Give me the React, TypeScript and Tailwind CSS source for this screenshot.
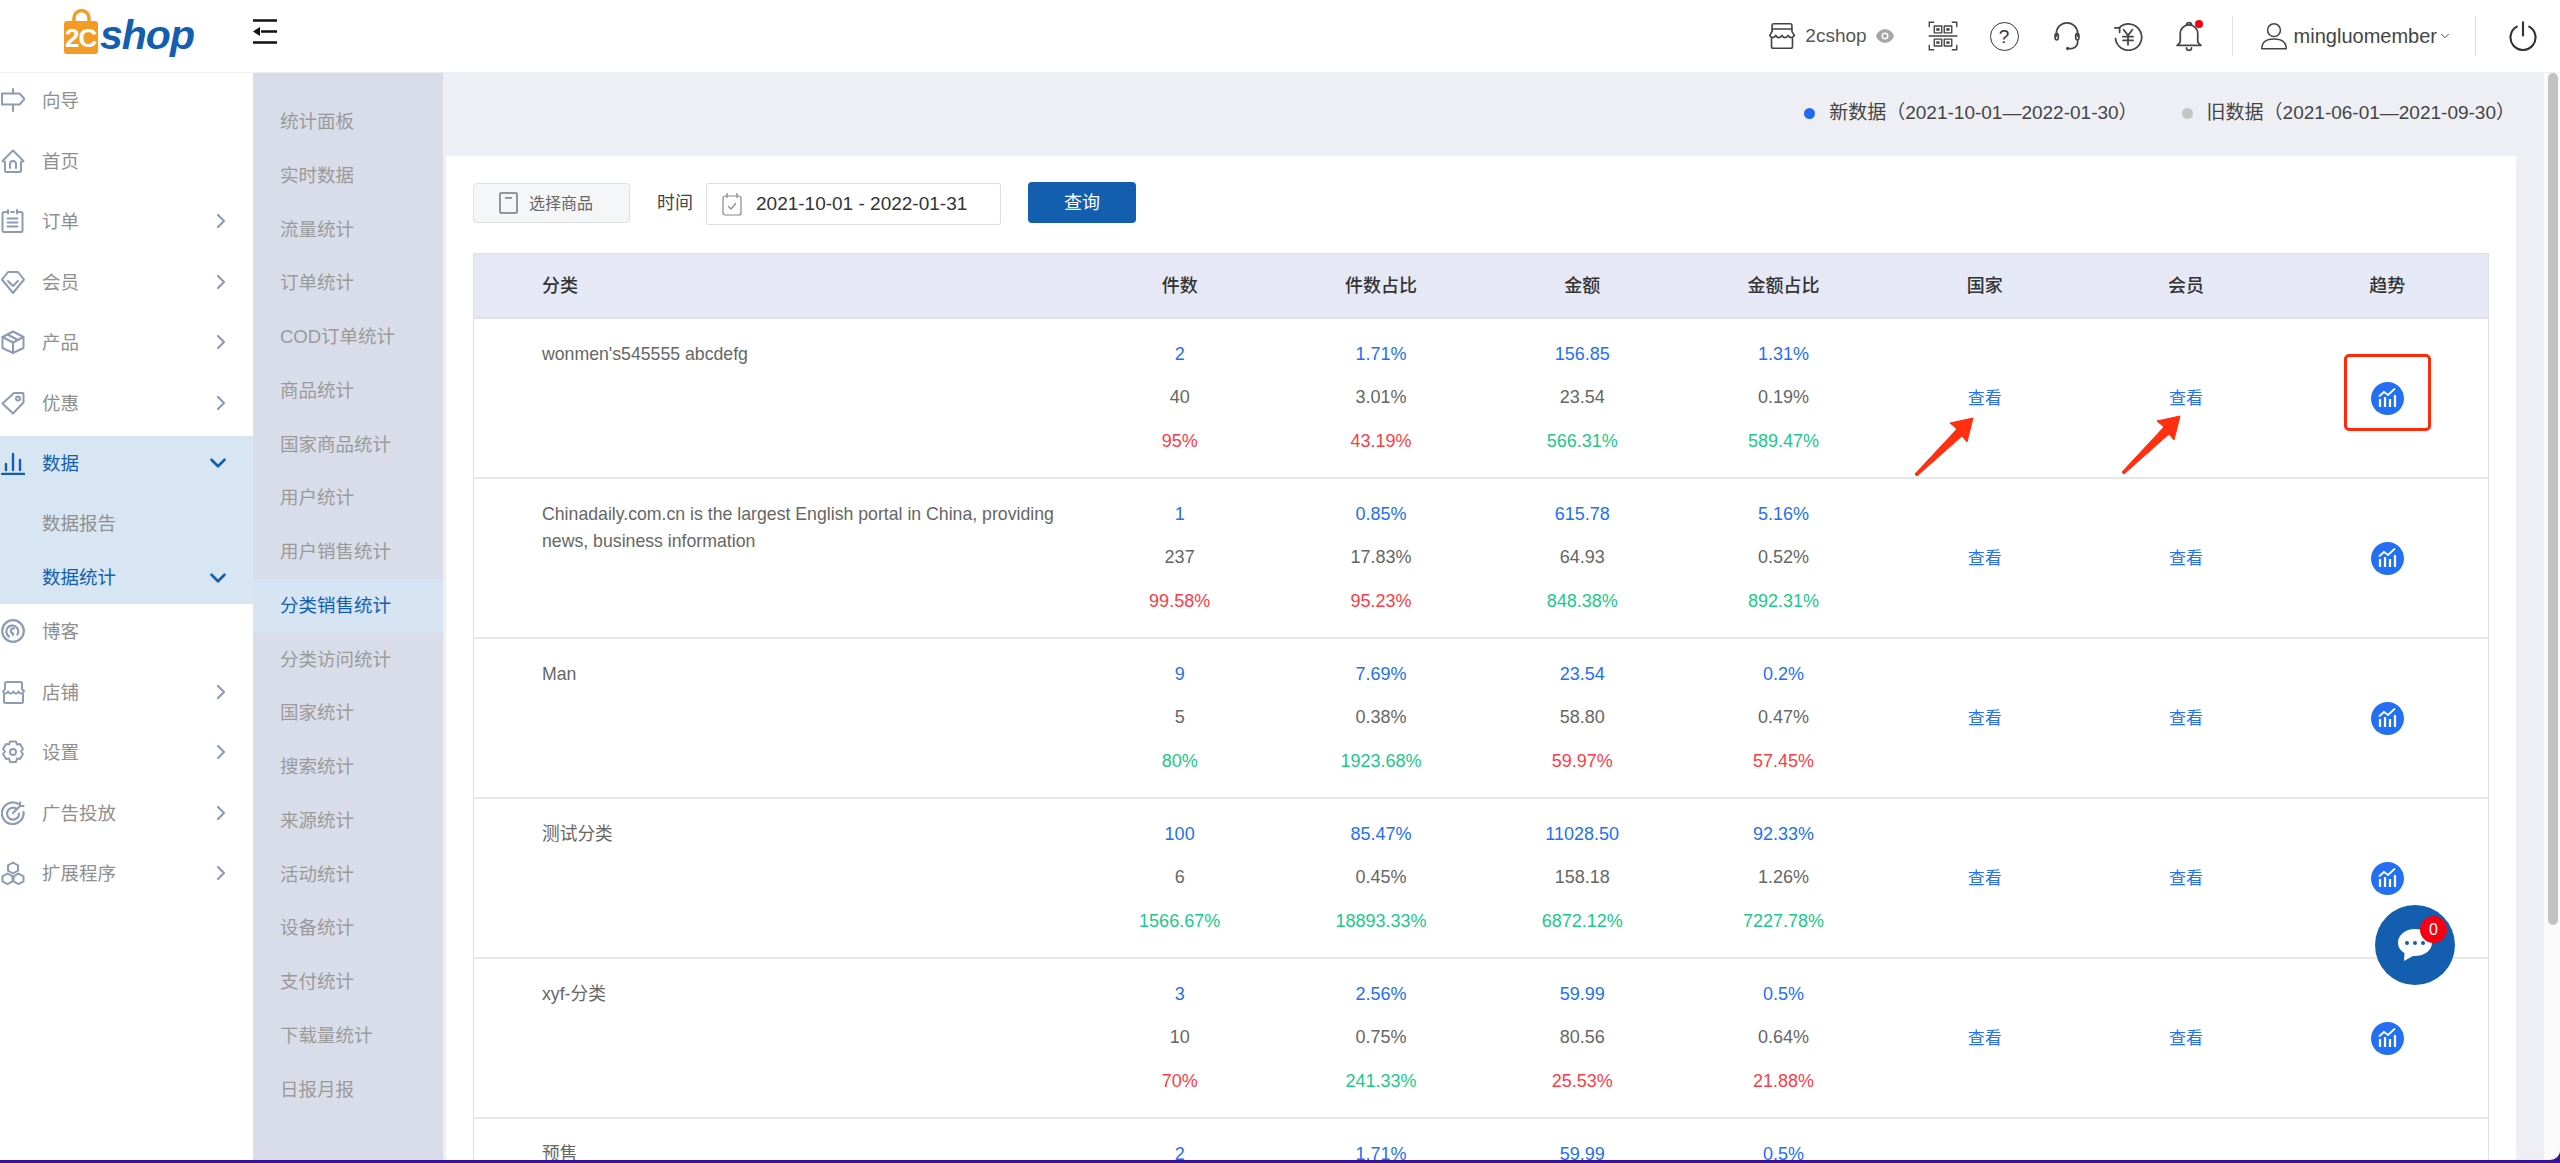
import { ReactNode } from "react";
import { ChevronDown, ChevronRight } from "lucide-react";

const FONT = "font-['Liberation_Sans','Noto_Sans_CJK_SC',sans-serif]";

function Ico({ children, size = 24, className = "" }: { children: ReactNode; size?: number; className?: string }) {
  return (
    <svg
      width={size}
      height={size}
      viewBox="0 0 24 24"
      fill="none"
      stroke="currentColor"
      strokeWidth="2"
      strokeLinecap="round"
      strokeLinejoin="round"
      className={className}
    >
      {children}
    </svg>
  );
}

const sideIcons: Record<string, ReactNode> = {
  guide: (
    <>
      <path d="M1 5.500h17.500l5 5.500-5 5.500H1z" />
      <path d="M12 1v4.500M12 16.500V23" />
    </>
  ),
  home: (
    <>
      <path d="M12 1.500 1.500 12l2.500 1v8.500a1.500 1.500 0 0 0 1.500 1.500h13a1.500 1.500 0 0 0 1.500-1.500V13l2.500-1z" />
      <path d="M9 19v-4a3 3 0 0 1 6 0v4" />
    </>
  ),
  order: (
    <>
      <path d="M7 3H3a1.500 1.500 0 0 0-1.500 1.500v17A1.500 1.500 0 0 0 3 23h17a1.500 1.500 0 0 0 1.500-1.500v-17A1.500 1.500 0 0 0 20 3h-4" />
      <path d="M7 1v3.500M16 1v3.500M10 3h3M6.500 9.500h10M6.500 13.500h10M6.500 17.500h10" />
    </>
  ),
  member: (
    <>
      <path d="M7 2h10l6 7.500L12 23 1 9.500z" />
      <path d="m7 11 5 5 5-5" />
    </>
  ),
  product: (
    <>
      <path d="M12 1.500 22.500 7v11L12 23 1.500 18V7z" />
      <path d="M1.500 7 12 12.500 22.500 7M12 12.500V23M6.500 4.500 17 10" />
    </>
  ),
  promo: (
    <>
      <path d="M13 2h8.500a1 1 0 0 1 1 1v8.500L12 22.500 1.500 12.500z" />
      <circle cx="17" cy="7.500" r="2" />
    </>
  ),
  data: (
    <>
      <path d="M1 23h23" strokeWidth="2.400" />
      <path d="M5 13v6M12 3v16M19 9v10" strokeWidth="2.400" />
    </>
  ),
  blog: (
    <>
      <circle cx="12" cy="12" r="10.800" strokeWidth="2.200" />
      <path d="M8 17.500a6 6 0 1 1 8.500-2" strokeWidth="2.200" />
      <path d="M12 16v-1.500a2.500 2.500 0 0 1 1-5" strokeWidth="2.200" />
    </>
  ),
  store: (
    <>
      <path d="M4 9V3.500A1.500 1.500 0 0 1 5.500 2h14A1.500 1.500 0 0 1 21 3.500V9l2 2" />
      <path d="M2 11.500 4 9M2 11.500c1 2.500 4 2.500 5 0 1 2.500 4 2.500 5.500 0 1 2.500 4 2.500 5 0 1 2.500 4 2.500 5 0" />
      <path d="M3 14v7.500A1.500 1.500 0 0 0 4.500 23h16a1.500 1.500 0 0 0 1.500-1.500V14" />
    </>
  ),
  gear: (
    <>
      <path d="m9 1.500 6 0 1 3 3-.5 3 5-2 2.500 2 2.500-3 5-3-.5-1 3.500-6 0-1-3.500-3 .5-3-5 2-2.500-2-2.500 3-5 3 .5z" />
      <circle cx="12" cy="12" r="3" />
    </>
  ),
  target: (
    <>
      <path d="M17 2.800A10.800 10.800 0 1 0 22.500 11" strokeWidth="2.200" />
      <path d="M15 7.500a6 6 0 1 0 3 5" strokeWidth="2.200" />
      <path d="M12 12l7-7M19 1.500V5h3.500" strokeWidth="2.200" />
    </>
  ),
  ext: (
    <>
      <path d="m12 1.500 5 2.800v5.400l-5 2.800-5-2.800V4.300z" />
      <path d="m6.500 12.500 5 2.800v5l-5 2.800-5-2.800v-5z" />
      <path d="m17.500 12.500 5 2.800v5l-5 2.800-5-2.800v-5z" />
    </>
  ),
};

function SideRow({ icon, label, arrow, gap = true }: { icon: string; label: string; arrow?: boolean; gap?: boolean }) {
  return (
    <div className={`flex h-[54px] items-center text-[18.500px] text-[#8f8f8f] ${gap ? "mb-[6.500px]" : ""}`}>
      <Ico className="ml-[1px] text-[#8e9bb4]">{sideIcons[icon]}</Ico>
      <span className="ml-[17px] flex-1 pt-[2px]">{label}</span>
      {arrow && <ChevronRight size={24} strokeWidth={2.200} className="mr-[20px] text-[#8e9bb4]" />}
    </div>
  );
}

function PrimarySide() {
  return (
    <aside className="w-[253px] shrink-0 bg-white">
      <SideRow icon="guide" label="向导" />
      <SideRow icon="home" label="首页" />
      <SideRow icon="order" label="订单" arrow />
      <SideRow icon="member" label="会员" arrow />
      <SideRow icon="product" label="产品" arrow />
      <SideRow icon="promo" label="优惠" arrow />
      <div className="bg-[#d8e6f4] text-[18.500px]">
        <div className="mb-[6px] flex h-[54px] items-center text-[#145eb0]">
          <Ico className="ml-[1px]">{sideIcons.data}</Ico>
          <span className="ml-[17px] flex-1 pt-[2px]">数据</span>
          <ChevronDown size={26} strokeWidth={2.400} className="mr-[22px]" />
        </div>
        <div className="flex h-[54px] items-center pl-[42px] pt-[2px] text-[#8f8f8f]">数据报告</div>
        <div className="flex h-[54px] items-center pl-[42px] pt-[2px] text-[#145eb0]">
          <span className="flex-1">数据统计</span>
          <ChevronDown size={26} strokeWidth={2.400} className="mr-[22px]" />
        </div>
      </div>
      <SideRow icon="blog" label="博客" />
      <SideRow icon="store" label="店铺" arrow />
      <SideRow icon="gear" label="设置" arrow />
      <SideRow icon="target" label="广告投放" arrow />
      <SideRow icon="ext" label="扩展程序" arrow />
    </aside>
  );
}

const subMenu = [
  "统计面板", "实时数据", "流量统计", "订单统计", "COD订单统计", "商品统计", "国家商品统计", "用户统计", "用户销售统计",
  "分类销售统计", "分类访问统计", "国家统计", "搜索统计", "来源统计", "活动统计", "设备统计", "支付统计", "下载量统计", "日报月报",
];

function SecondarySide() {
  return (
    <aside className="w-[190px] shrink-0 bg-[#d9dde9] pt-[22px]">
      {subMenu.map((m) => (
        <div
          key={m}
          className={`flex h-[53.750px] items-center pl-[27px] text-[18.500px] ${
            m === "分类销售统计" ? "bg-[#d6e4f3] text-[#145eb0]" : "text-[#9a9a9a]"
          }`}
        >
          {m}
        </div>
      ))}
    </aside>
  );
}

function Logo() {
  return (
    <div className="ml-[64px] flex w-[189px] items-center -mt-[10px]">
      <div className="relative h-[46px] w-[35px]">
        <svg width="35" height="46" viewBox="0 0 35 46" className="absolute inset-0">
          <path d="M10 16V10a7.500 7.500 0 0 1 15 0v6" fill="none" stroke="#f39c25" strokeWidth="3.500" />
          <rect x="0" y="13" width="34" height="33" rx="3" fill="#f39c25" />
        </svg>
        <span className="absolute left-[1px] top-[17px] text-[26px] font-bold leading-[26px] tracking-[-1px] text-white">2C</span>
      </div>
      <span className="ml-[1px] mt-[8px] text-[41px] font-bold italic leading-none tracking-[-1px] text-[#145eb0]">shop</span>
    </div>
  );
}

function TopBar() {
  return (
    <header className="flex h-[73px] shrink-0 items-center border-b border-[#eeeff5] bg-white text-[#333]">
      <Logo />
      <svg width="24" height="25" viewBox="0 0 24 25" className="-mt-[9px]">
        <path d="M0 1.500h24M8 12.500h16M0 23.500h24" stroke="#111" strokeWidth="2.500" />
        <path d="M0 12.500 7 8v9z" fill="#111" />
      </svg>
      <div className="ml-auto flex items-center">
        <Ico size={28} className="text-[#444]">
          <path d="M3.500 8V3A1.500 1.500 0 0 1 5 1.500h14A1.500 1.500 0 0 1 20.500 3v5l2 3.500" strokeWidth="1.400" />
          <path d="M1.500 11.500 3.500 8M3.500 6h17M1.500 11.500c1 2.500 4 2.500 5.200 0 1 2.500 4 2.500 5.300 0 1 2.500 4 2.500 5.300 0 1 2.500 4 2.500 5.200 0" strokeWidth="1.400" />
          <path d="M3 14.500v6.500A1.500 1.500 0 0 0 4.500 22.500h15A1.500 1.500 0 0 0 21 21v-6.500" strokeWidth="1.400" />
        </Ico>
        <span className="ml-[9px] text-[19px] text-[#555]">2cshop</span>
        <svg width="18" height="14" viewBox="0 0 18 14" className="ml-[9px]">
          <path d="M0 7c3-9 15-9 18 0-3 9-15 9-18 0z" fill="#a6a6a6" />
          <circle cx="9" cy="7" r="3.500" fill="#fff" />
          <circle cx="9" cy="7" r="2" fill="#a6a6a6" />
        </svg>
        <Ico size={30} className="ml-[34px] text-[#444]">
          <path d="M1 5V1h4M19 1h4v4M1 19v4h4M19 23h4v-4M0.500 12h23" strokeWidth="1.100" strokeLinecap="butt" strokeLinejoin="miter" />
          <path d="M5 4h6v5.500H5zM13 4h6v5.500h-6zM5 14.500h6V20H5zM13 14.500h6V20h-6z" strokeWidth="1.100" />
          <path d="M7 6h2v1.500H7zM15 6h2v1.500h-2zM7 16.500h2V18H7zM15 16.500h2V18h-2z" fill="currentColor" strokeWidth="0.500" />
        </Ico>
        <div className="ml-[32px] flex h-[29px] w-[29px] items-center justify-center rounded-full border-[1.600px] border-[#333] text-[19px] leading-none text-[#333]">?</div>
        <Ico size={30} className="ml-[33px] text-[#444]">
          <path d="M3.500 12V10a8.500 8.500 0 0 1 17 0v2" strokeWidth="1.400" />
          <rect x="2.500" y="10" width="2.500" height="5" rx="1.200" strokeWidth="1.400" />
          <rect x="19" y="10" width="2.500" height="5" rx="1.200" strokeWidth="1.400" />
          <path d="M20.500 15v2a5 5 0 0 1-5 5h-2" strokeWidth="1.400" />
          <circle cx="12.500" cy="22" r="1" fill="currentColor" strokeWidth="0.800" />
        </Ico>
        <Ico size={30} className="ml-[31px] text-[#444]">
          <path d="M5 5.500A10.500 10.500 0 1 1 2 14" strokeWidth="1.400" />
          <path d="M1.500 5.500h3.800V9M8.500 7l3.500 4.500L15.500 7M12 11.500V19M8 12.500h8M8 15.500h8" strokeWidth="1.400" />
        </Ico>
        <div className="relative ml-[31px]">
          <Ico size={30} className="text-[#444]">
            <path d="M5 17V10a7 7 0 0 1 14 0v7l2.500 2.500h-19zM10 3.200a2 2 0 0 1 4 0M10 21.500a2 2 0 0 0 4 0" strokeWidth="1.400" />
          </Ico>
          <span className="absolute -top-[1px] right-[1px] h-[8px] w-[8px] rounded-full bg-[#f40012]" />
        </div>
        <div className="ml-[28px] h-[40px] w-[1px] bg-[#e2e2e2]" />
        <Ico size={28} className="ml-[27px] text-[#444]">
          <circle cx="12" cy="7" r="5.500" strokeWidth="1.300" />
          <path d="M1.500 23c0-6 4-8.500 10.500-8.500S22.500 17 22.500 23z" strokeWidth="1.300" />
        </Ico>
        <span className="ml-[6px] text-[20px] text-[#444]">mingluomember</span>
        <ChevronDown size={14} strokeWidth={1.600} className="ml-[1px] text-[#444]" />
        <div className="ml-[23px] h-[40px] w-[1px] bg-[#e2e2e2]" />
        <Ico size={30} className="ml-[32px] mr-[22px] text-[#333]">
          <path d="M7 4.500a10 10 0 1 0 10 0M12 1v10.500" strokeWidth="1.700" />
        </Ico>
      </div>
    </header>
  );
}

type Tone = "b" | "n" | "r" | "g";
const toneCls: Record<Tone, string> = {
  b: "text-[#2370f4]",
  n: "text-[#666]",
  r: "text-[#ff3b46]",
  g: "text-[#19c98a]",
};

type Cell = [string, string, string, Tone];
const rows: { name: string; cells: Cell[] }[] = [
  {
    name: "wonmen's545555 abcdefg",
    cells: [
      ["2", "40", "95%", "r"],
      ["1.71%", "3.01%", "43.19%", "r"],
      ["156.85", "23.54", "566.31%", "g"],
      ["1.31%", "0.19%", "589.47%", "g"],
    ],
  },
  {
    name: "Chinadaily.com.cn is the largest English portal in China, providing news, business information",
    cells: [
      ["1", "237", "99.58%", "r"],
      ["0.85%", "17.83%", "95.23%", "r"],
      ["615.78", "64.93", "848.38%", "g"],
      ["5.16%", "0.52%", "892.31%", "g"],
    ],
  },
  {
    name: "Man",
    cells: [
      ["9", "5", "80%", "g"],
      ["7.69%", "0.38%", "1923.68%", "g"],
      ["23.54", "58.80", "59.97%", "r"],
      ["0.2%", "0.47%", "57.45%", "r"],
    ],
  },
  {
    name: "测试分类",
    cells: [
      ["100", "6", "1566.67%", "g"],
      ["85.47%", "0.45%", "18893.33%", "g"],
      ["11028.50", "158.18", "6872.12%", "g"],
      ["92.33%", "1.26%", "7227.78%", "g"],
    ],
  },
  {
    name: "xyf-分类",
    cells: [
      ["3", "10", "70%", "r"],
      ["2.56%", "0.75%", "241.33%", "g"],
      ["59.99", "80.56", "25.53%", "r"],
      ["0.5%", "0.64%", "21.88%", "r"],
    ],
  },
  {
    name: "预售",
    cells: [
      ["2", "", "", "n"],
      ["1.71%", "", "", "n"],
      ["59.99", "", "", "n"],
      ["0.5%", "", "", "n"],
    ],
  },
];

function TrendIcon() {
  return (
    <svg width="33" height="33" viewBox="0 0 33 33">
      <circle cx="16.500" cy="16.500" r="16.500" fill="#2370f4" />
      <path d="M8 14.500l5-4.500 4 3 7-6.500" fill="none" stroke="#fff" strokeWidth="1.800" />
      <path d="M9 17v8M14 15v10M19 17v8M24 13v12" stroke="#fff" strokeWidth="2.200" />
    </svg>
  );
}

const GRID = "grid grid-cols-[605px_repeat(7,1fr)]";

function DataRow({ name, cells }: { name: string; cells: Cell[] }) {
  return (
    <div className={`${GRID} h-[160px] shrink-0 border-b-2 border-[#e8e8e8] text-[18px]`}>
      <div className="pl-[68px] pr-[10px] pt-[22px] text-[17.700px] leading-[27px] text-[#666]">{name}</div>
      {cells.map((c, i) => (
        <div key={i} className="flex flex-col items-center pt-[13.500px]">
          <span className={`flex h-[43.500px] items-center ${toneCls.b}`}>{c[0]}</span>
          <span className={`flex h-[43.500px] items-center ${toneCls.n}`}>{c[1]}</span>
          <span className={`flex h-[43.500px] items-center ${toneCls[c[3]]}`}>{c[2]}</span>
        </div>
      ))}
      <div className="flex items-center justify-center pt-[1px] text-[17px] text-[#2370f4]">查看</div>
      <div className="flex items-center justify-center pt-[1px] text-[17px] text-[#2370f4]">查看</div>
      <div className="flex items-center justify-center">
        <TrendIcon />
      </div>
    </div>
  );
}

function Toolbar() {
  return (
    <div className="flex h-[42px] items-start">
      <button className="flex h-[40px] w-[157px] items-center rounded-[4px] border border-[#e0e0e0] bg-[#f5f6f8] pl-[25px] text-[16px] text-[#666]">
        <svg width="19" height="24" viewBox="0 0 19 24" fill="none" stroke="#777" strokeWidth="1.500">
          <rect x="1" y="2" width="17" height="20" rx="1" />
          <path d="M6 7h7" />
        </svg>
        <span className="ml-[11px] pt-[2px]">选择商品</span>
      </button>
      <span className="ml-[27px] mr-[13px] flex h-[40px] items-center pt-[1px] text-[18px] text-[#444]">时间</span>
      <div className="flex h-[42px] w-[295px] items-center rounded-[2px] border border-[#dedede] bg-white pl-[15px] text-[19px] text-[#333]">
        <svg width="20" height="24" viewBox="0 0 20 24" fill="none" stroke="#888" strokeWidth="1.200">
          <rect x="1" y="4" width="18" height="19" rx="2" />
          <path d="M5 1v5M15 1v5M6 14l3 3 5-6" />
        </svg>
        <span className="ml-[14px]">2021-10-01 - 2022-01-31</span>
      </div>
      <button className="ml-[27px] h-[41px] w-[108px] -translate-y-[1px] rounded-[4px] bg-[#145eb0] pt-[2px] text-[18px] text-white">查询</button>
    </div>
  );
}

function Legend({ dot, text }: { dot: string; text: string }) {
  return (
    <div className="flex items-center text-[19px] text-[#444]">
      <span className={`h-[11px] w-[11px] rounded-full ${dot}`} />
      <span className="ml-[14px]">{text}</span>
    </div>
  );
}

function Arrow({ className }: { className: string }) {
  return (
    <svg width="70" height="70" viewBox="0 0 70 70" className={`absolute ${className}`}>
      <path d="M5 64 47 19 40 13 63 8 57 32 52 26 7 66z" fill="#ff2f10" stroke="#ff2f10" strokeLinejoin="round" />
    </svg>
  );
}

export default function App() {
  return (
    <div className={`relative flex h-[1163px] w-full flex-col overflow-hidden bg-white ${FONT}`}>
      <TopBar />
      <div className="flex min-h-0 flex-1">
        <PrimarySide />
        <SecondarySide />
        <main className="flex min-w-0 flex-1 flex-col bg-[#eeeff5]">
          <div className="flex h-[83px] shrink-0 items-center justify-end gap-[44px] pb-[2px] pr-[29px]">
            <Legend dot="bg-[#1f6bf5]" text="新数据（2021-10-01—2022-01-30）" />
            <Legend dot="bg-[#c4c4c4]" text="旧数据（2021-06-01—2021-09-30）" />
          </div>
          <section className="ml-[3px] mr-[28px] flex min-h-0 flex-1 flex-col overflow-hidden bg-white px-[27px] pt-[27px]">
            <Toolbar />
            <div className="mt-[28px] flex flex-col border-x border-t border-[#dfdfdf]">
              <div className={`${GRID} h-[65px] shrink-0 items-center border-b-2 border-[#e0e2ea] bg-[#e6e9f5] pt-[2px] text-[18px] font-medium text-[#333]`}>
                <div className="pl-[68px]">分类</div>
                {["件数", "件数占比", "金额", "金额占比", "国家", "会员", "趋势"].map((h) => (
                  <div key={h} className="text-center">{h}</div>
                ))}
              </div>
              {rows.map((r) => (
                <DataRow key={r.name} name={r.name} cells={r.cells} />
              ))}
            </div>
          </section>
        </main>
        <div className="w-[16px] shrink-0 bg-[#fafafa] pl-[4px]">
          <div className="h-[852px] w-[10px] rounded-full bg-[#c1c1c1]" />
        </div>
      </div>

      {/* annotations drawn over the screenshot */}
      <div className="absolute left-[2344px] top-[354px] h-[77px] w-[87px] rounded-[5px] border-[3px] border-[#ff2a0c]" />
      <Arrow className="left-[1910px] top-[410px]" />
      <Arrow className="left-[2117px] top-[408px]" />

      {/* chat bubble */}
      <div className="absolute left-[2375px] top-[905px] flex h-[80px] w-[80px] items-center justify-center rounded-full bg-[#145eb0]">
        <svg width="34" height="32" viewBox="0 0 34 32">
          <path d="M17 0C7.500 0 0 6 0 13.500c0 5 3 8.500 6.500 10.500L6 32l9-5h2c9.500 0 17-5.500 17-13.500S26.500 0 17 0z" fill="#fff" />
          <circle cx="9" cy="14" r="2" fill="#145eb0" />
          <circle cx="17" cy="14" r="2" fill="#145eb0" />
          <circle cx="25" cy="14" r="2" fill="#145eb0" />
        </svg>
        <span className="absolute left-[45px] top-[11px] flex h-[27px] w-[27px] items-center justify-center rounded-full bg-[#f40012] text-[16px] leading-none text-white">0</span>
      </div>

      {/* window edge */}
      <div className="absolute inset-x-0 bottom-0 h-[3px] bg-[#3a1296]" />
      <svg width="12" height="12" viewBox="0 0 12 12" className="absolute bottom-0 right-0">
        <path d="M12 0v12H0V9h2a10 9 0 0 0 10-9z" fill="#3a1296" />
      </svg>
    </div>
  );
}
